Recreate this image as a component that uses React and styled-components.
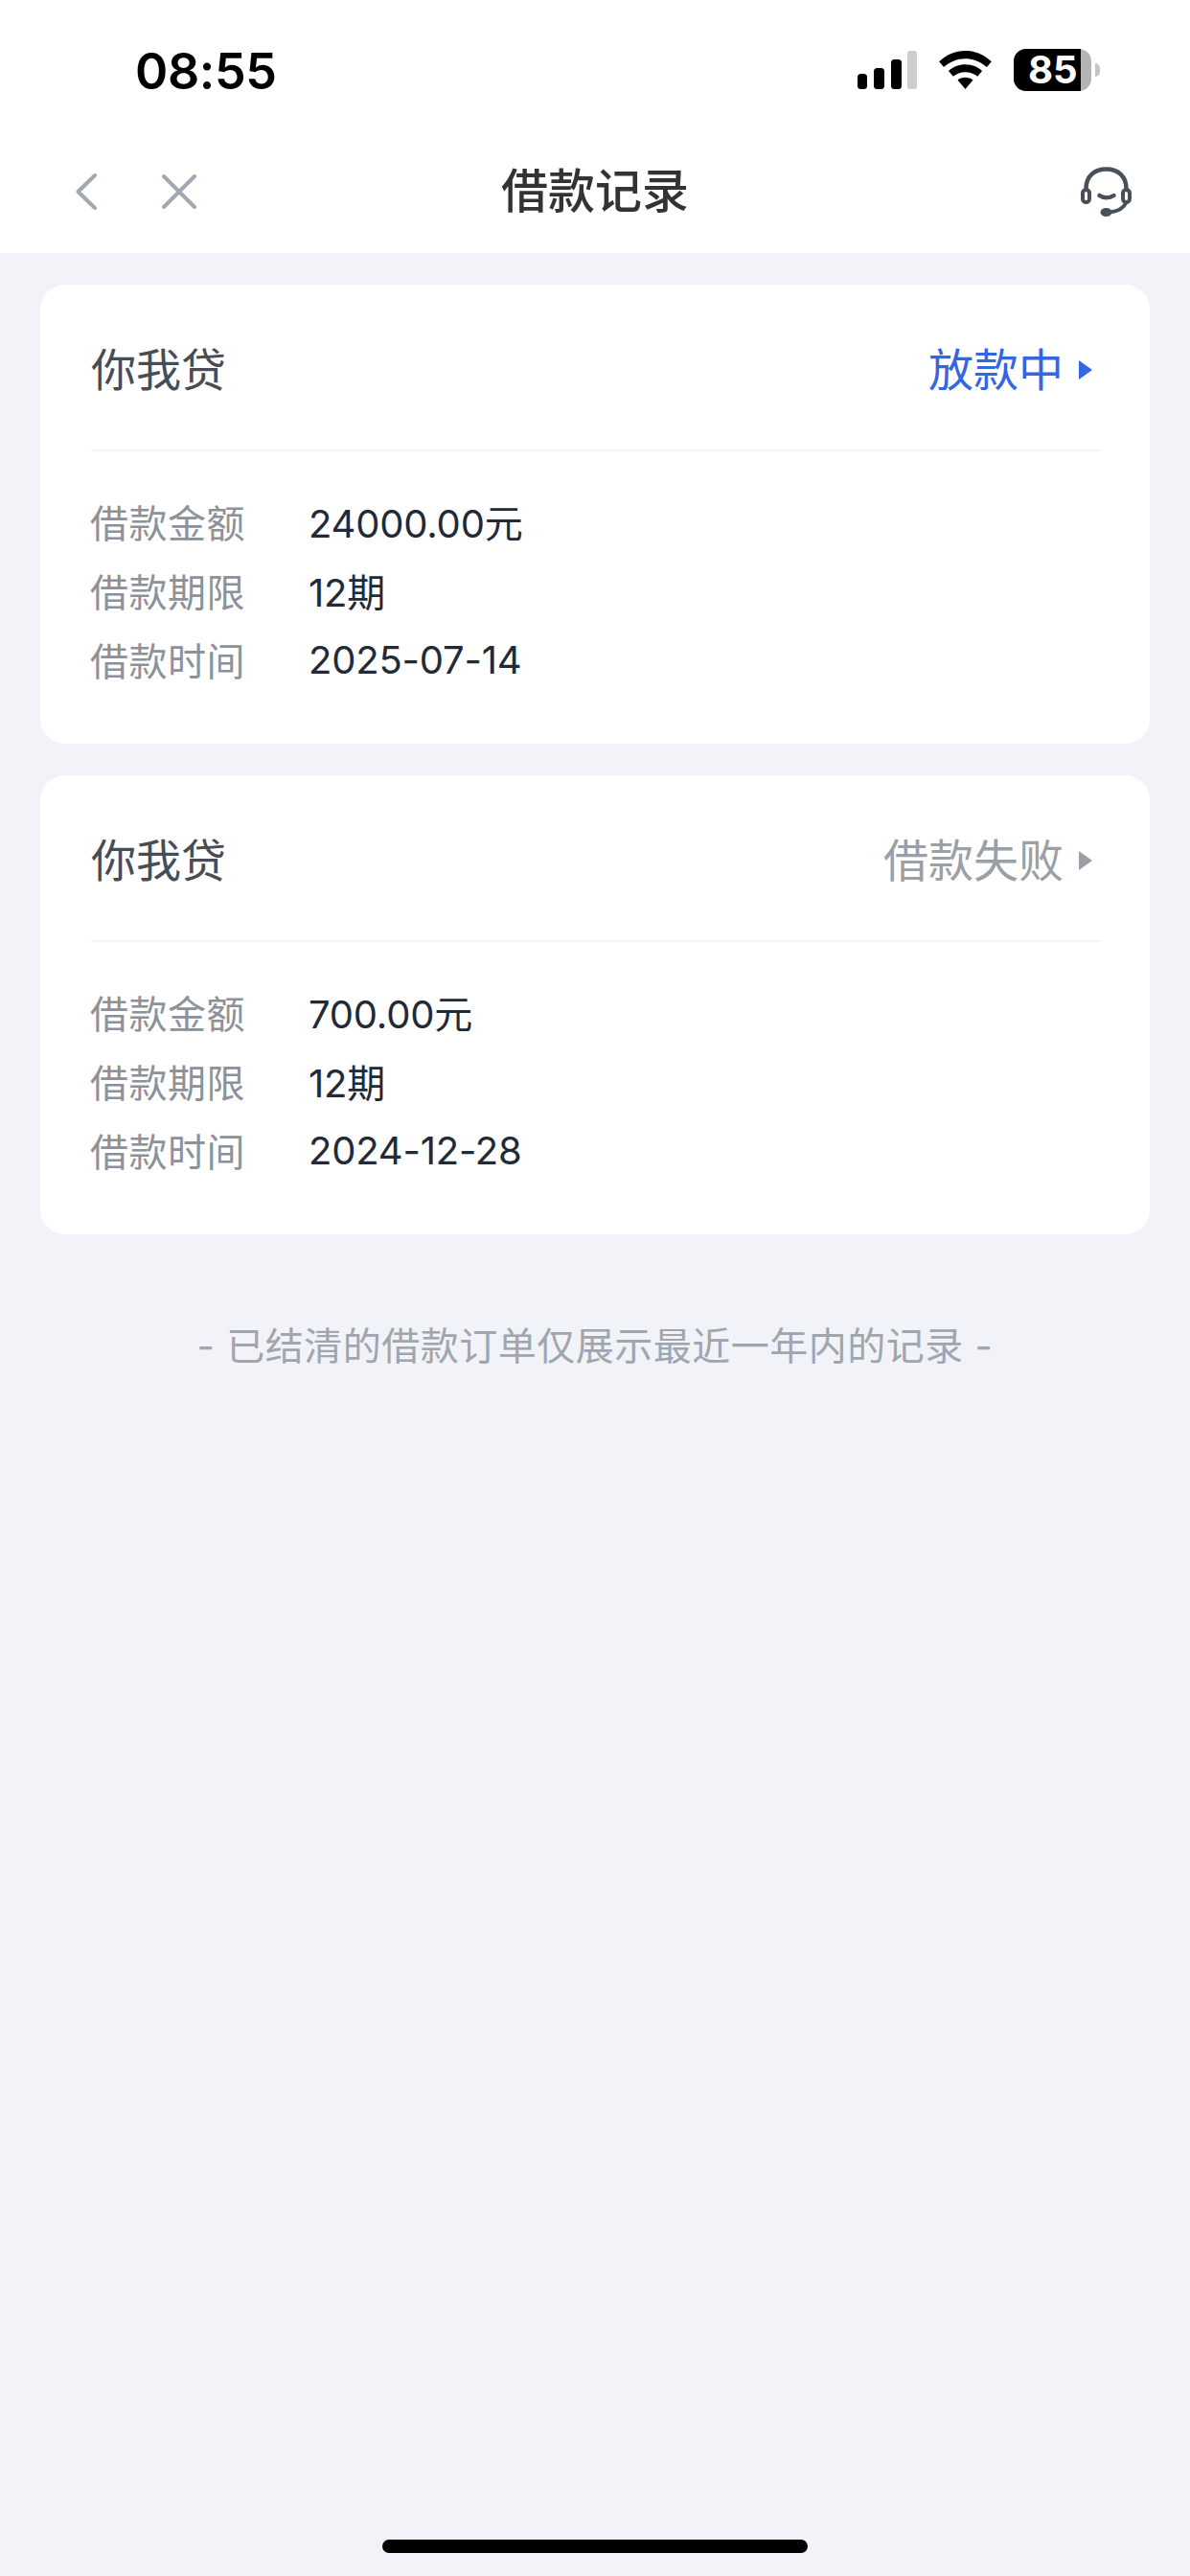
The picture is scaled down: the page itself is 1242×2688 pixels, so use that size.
import React from "react";
import styled, { createGlobalStyle } from "styled-components";

const GlobalStyle = createGlobalStyle`
  html, body {
    margin: 0;
    padding: 0;
    background: #f1f3f8;
  }
  * {
    box-sizing: border-box;
  }
`;

const CJK = `Inter, "Noto Sans CJK SC", sans-serif`;

const Page = styled.div`
  position: relative;
  width: 1242px;
  height: 2688px;
  background: #f1f3f8;
  display: flex;
  flex-direction: column;
  font-family: ${CJK};
  overflow: hidden;
`;

const Header = styled.header`
  height: 264px;
  background: #ffffff;
  display: flex;
  flex-direction: column;
`;

const StatusBar = styled.div`
  height: 148px;
  display: flex;
  align-items: flex-start;
  justify-content: space-between;
  padding: 44px 94px 0 141px;
`;

const Time = styled.div`
  font-size: 52px;
  line-height: 62px;
  font-weight: 600;
  letter-spacing: -0.4px;
  color: #000;
`;

const StatusIcons = styled.div`
  display: flex;
  align-items: center;
  gap: 23px;
  height: 58px;
`;

const Battery = styled.div`
  position: relative;
  width: 81px;
  height: 44px;
  border-radius: 13px;
  background: #b4b4b4;
  &::before {
    content: "";
    position: absolute;
    inset: 0 11px 0 0;
    border-radius: 13px 0 0 13px;
    background: #000;
  }
`;

const BatteryLabel = styled.span`
  position: absolute;
  left: 15px;
  top: 0;
  font-size: 40px;
  line-height: 44px;
  font-weight: 700;
  color: #fff;
`;

const BatteryWrap = styled.div`
  display: flex;
  align-items: center;
  gap: 4px;
`;

const BatteryTip = styled.div`
  width: 5px;
  height: 14px;
  border-radius: 0 7px 7px 0;
  background: #c4c4c4;
`;

const NavBar = styled.div`
  flex: 1;
  display: flex;
  align-items: center;
  justify-content: space-between;
  padding: 0 61px 12px 79px;
  position: relative;
`;

const NavLeft = styled.div`
  display: flex;
  align-items: center;
  gap: 68px;
`;

const NavTitle = styled.h1`
  position: absolute;
  left: 0;
  right: 0;
  top: 0;
  margin: 0;
  text-align: center;
  font-size: 49px;
  line-height: 104px;
  font-weight: 500;
  color: #333;
`;

const List = styled.main`
  display: flex;
  flex-direction: column;
  gap: 33px;
  padding: 33px 42px 0;
`;

const Card = styled.section`
  height: 479px;
  background: #fff;
  border-radius: 26px;
  padding: 0 53px;
`;

const CardHead = styled.div`
  height: 174px;
  padding-top: 5px;
  display: flex;
  align-items: center;
  justify-content: space-between;
  border-bottom: 2px solid #f2f3f7;
`;

const CardTitle = styled.div`
  font-size: 47px;
  line-height: 60px;
  color: #474c55;
`;

const Status = styled.div`
  display: flex;
  align-items: center;
  gap: 16px;
  padding-right: 7px;
  font-size: 47px;
  line-height: 60px;
  color: ${(props) => props.color};
`;

const Arrow = styled.span`
  width: 0;
  height: 0;
  border-left: 14px solid ${(props) => props.color};
  border-top: 10px solid transparent;
  border-bottom: 10px solid transparent;
`;

const Rows = styled.dl`
  margin: 37px 0 0;
  display: flex;
  flex-direction: column;
`;

const Row = styled.div`
  display: flex;
  height: 72px;
  align-items: center;
  font-size: 40px;
`;

const Label = styled.dt`
  width: 228px;
  margin-left: -1px;
  letter-spacing: 0.5px;
  color: #8d9199;
`;

const Value = styled.dd`
  margin: 0;
  letter-spacing: -0.2px;
  color: #222937;
`;

const Footnote = styled.p`
  margin: 87px 0 0;
  text-align: center;
  font-size: 40px;
  line-height: 60px;
  letter-spacing: 0.5px;
  color: #a0a5ae;
`;

const HomeBar = styled.div`
  position: absolute;
  left: 399px;
  top: 2650px;
  width: 444px;
  height: 14px;
  border-radius: 7px;
  background: #000;
`;

const Signal = () => (
  <svg width="62" height="40" viewBox="0 0 62 40">
    <rect x="0" y="24" width="10" height="16" rx="3.500" fill="#000" />
    <rect x="17" y="18" width="11" height="22" rx="3.500" fill="#000" />
    <rect x="35" y="9" width="11" height="31" rx="3.500" fill="#000" />
    <rect x="52" y="0" width="10" height="40" rx="3" fill="#cdcdcd" />
  </svg>
);

const Wifi = () => (
  <svg width="55" height="40" viewBox="0 0 56 41">
    <path d="M28 0C17 0 7.600 4.300 0 11.500L5 17.500C11 12 19 8.500 28 8.500S45 12 51 17.500L56 11.500C48.400 4.300 39 0 28 0Z" fill="#000" />
    <path d="M28 14.500C21 14.500 14.800 17 10 21.500L15 27.500C18.500 24.500 23 22.800 28 22.800S37.500 24.500 41 27.500L46 21.500C41.200 17 35 14.500 28 14.500Z" fill="#000" />
    <path d="M28 28.500C24.800 28.500 22 29.500 19.800 31.300L28 41L36.200 31.300C34 29.500 31.200 28.500 28 28.500Z" fill="#000" />
  </svg>
);

const BackIcon = () => (
  <svg width="22" height="38" viewBox="0 0 22 38" fill="none">
    <path d="M20 2L2.500 19L20 36" stroke="#a2a8b2" strokeWidth="4" strokeLinecap="round" strokeLinejoin="round" />
  </svg>
);

const CloseIcon = () => (
  <svg width="36" height="36" viewBox="0 0 36 36" fill="none">
    <path d="M2 2L34 34M34 2L2 34" stroke="#a2a8b2" strokeWidth="4" strokeLinecap="round" />
  </svg>
);

const HeadsetIcon = () => (
  <svg width="53" height="52" viewBox="0 0 53 52" fill="none">
    <path d="M5.500 23C5.500 10 14 2.500 26.500 2.500S47.500 10 47.500 23" stroke="#4a5059" strokeWidth="4.500" />
    <rect x="2" y="24" width="7" height="13" rx="3.500" stroke="#4a5059" strokeWidth="4" />
    <rect x="44" y="24" width="7" height="13" rx="3.500" stroke="#4a5059" strokeWidth="4" />
    <path d="M47.500 37C45 43 39 46.500 30 47.500" stroke="#4a5059" strokeWidth="4" />
    <ellipse cx="26.500" cy="47.500" rx="6" ry="4.500" fill="#4a5059" />
    <path d="M19.500 30C23.500 33 30 33 34.500 30" stroke="#4a5059" strokeWidth="4.500" strokeLinecap="round" />
  </svg>
);

const records = [
  { status: "放款中", color: "#3366e0", amount: "24000.00元", term: "12期", date: "2025-07-14" },
  { status: "借款失败", color: "#9a9fa8", amount: "700.00元", term: "12期", date: "2024-12-28" },
];

function App() {
  return (
    <Page>
      <GlobalStyle />
      <Header>
        <StatusBar>
          <Time>08:55</Time>
          <StatusIcons>
            <Signal />
            <Wifi />
            <BatteryWrap>
              <Battery>
                <BatteryLabel>85</BatteryLabel>
              </Battery>
              <BatteryTip />
            </BatteryWrap>
          </StatusIcons>
        </StatusBar>
        <NavBar>
          <NavLeft>
            <BackIcon />
            <CloseIcon />
          </NavLeft>
          <NavTitle>借款记录</NavTitle>
          <HeadsetIcon />
        </NavBar>
      </Header>
      <List>
        {records.map((r) => (
          <Card key={r.date}>
            <CardHead>
              <CardTitle>你我贷</CardTitle>
              <Status color={r.color}>
                {r.status}
                <Arrow color={r.color} />
              </Status>
            </CardHead>
            <Rows>
              <Row>
                <Label>借款金额</Label>
                <Value>{r.amount}</Value>
              </Row>
              <Row>
                <Label>借款期限</Label>
                <Value>{r.term}</Value>
              </Row>
              <Row>
                <Label>借款时间</Label>
                <Value>{r.date}</Value>
              </Row>
            </Rows>
          </Card>
        ))}
      </List>
      <Footnote>- 已结清的借款订单仅展示最近一年内的记录 -</Footnote>
      <HomeBar />
    </Page>
  );
}

export default App;
